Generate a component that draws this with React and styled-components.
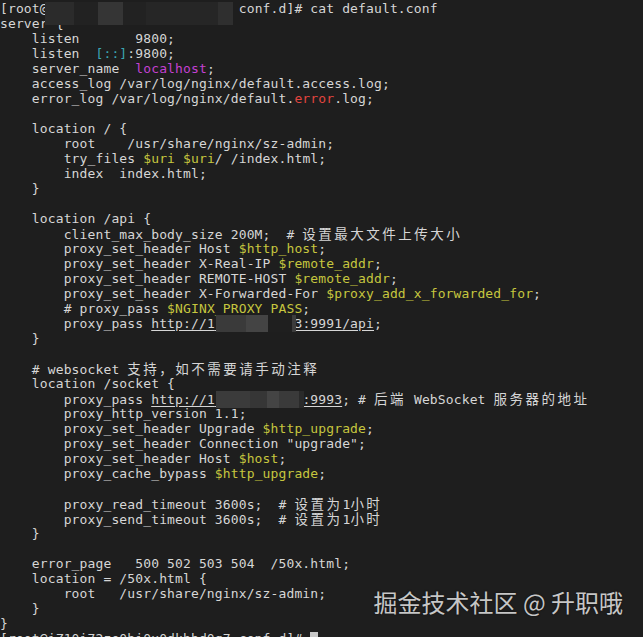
import React from 'react';
import styled, { createGlobalStyle } from 'styled-components';

const GlobalStyle = createGlobalStyle`
  html, body {
    margin: 0;
    padding: 0;
    background: #1e1e1e;
  }
`;

const HOST = 'XXXXXXXXXXXXXXXXXXXXXXX';

// CJK glyphs take two terminal cells
const renderText = (text) =>
  text.split(/([\u3000-\u9fff\uff00-\uffef]+)/).map((part, i) =>
    /[\u3000-\u9fff\uff00-\uffef]/.test(part) ? <Wide key={i}>{part}</Wide> : part
  );

function Mask({ left, top, height, segments, children }) {
  return (
    <MaskWrap>
      {children}
      <MaskBox $left={left} $top={top} $height={height}>
        {segments.map(([w, c], i) => (
          <MaskSeg key={i} $w={w} $c={c} />
        ))}
      </MaskBox>
    </MaskWrap>
  );
}

const promptMask = [
  [29, '#2b2b2b'],
  [24, '#222222'],
  [25, '#353535'],
  [23, '#222222'],
  [72, '#262626'],
  [15, '#2f2f2f'],
];

const apiMask = [
  [30, '#3a3a3a'],
  [22, '#444444'],
  [24, '#1f1f1f'],
  [4, '#3c3c3c'],
];

const socketMask = [
  [34, '#3b3b3b'],
  [17, '#363636'],
  [12, '#444444'],
  [20, '#3a3a3a'],
  [5, '#2a2a2a'],
];

function App() {
  return (
    <React.Fragment>
      <GlobalStyle />
      <Terminal>
        <Line>
          [root@
          <Mask left={-3} top={1} height={23} segments={promptMask}>
            {HOST}
          </Mask>
          {' conf.d]# cat default.conf'}
        </Line>
        <Line>server {'{'}</Line>
        <Line>{'    listen       9800;'}</Line>
        <Line>
          {'    listen  '}
          <Ipv6>[::]</Ipv6>
          {':9800;'}
        </Line>
        <Line>
          {'    server_name  '}
          <Host>localhost</Host>;
        </Line>
        <Line>{'    access_log /var/log/nginx/default.access.log;'}</Line>
        <Line>
          {'    error_log /var/log/nginx/default.'}
          <Err>error</Err>
          {'.log;'}
        </Line>
        <Line />
        <Line>{'    location / {'}</Line>
        <Line>{'        root    /usr/share/nginx/sz-admin;'}</Line>
        <Line>
          {'        try_files '}
          <Var>$uri</Var> <Var>$uri</Var>
          {'/ /index.html;'}
        </Line>
        <Line>{'        index  index.html;'}</Line>
        <Line>{'    }'}</Line>
        <Line />
        <Line>{'    location /api {'}</Line>
        <Line>{renderText('        client_max_body_size 200M;  # 设置最大文件上传大小')}</Line>
        <Line>
          {'        proxy_set_header Host '}
          <Var>$http_host</Var>;
        </Line>
        <Line>
          {'        proxy_set_header X-Real-IP '}
          <Var>$remote_addr</Var>;
        </Line>
        <Line>
          {'        proxy_set_header REMOTE-HOST '}
          <Var>$remote_addr</Var>;
        </Line>
        <Line>
          {'        proxy_set_header X-Forwarded-For '}
          <Var>$proxy_add_x_forwarded_for</Var>;
        </Line>
        <Line>
          {'        # proxy_pass '}
          <Var>$NGINX_PROXY_PASS</Var>;
        </Line>
        <Line>
          {'        proxy_pass '}
          <Link>
            http://1
            <Mask left={1} top={-1} height={17} segments={apiMask}>
              0000000000
            </Mask>
            3:9991/api
          </Link>
          ;
        </Line>
        <Line>{'    }'}</Line>
        <Line />
        <Line>{renderText('    # websocket 支持，如不需要请手动注释')}</Line>
        <Line>{'    location /socket {'}</Line>
        <Line>
          {'        proxy_pass '}
          <Link>
            http://1
            <Mask left={1} top={-1} height={17} segments={socketMask}>
              00000000000
            </Mask>
            :9993
          </Link>
          {renderText('; # 后端 WebSocket 服务器的地址')}
        </Line>
        <Line>{'        proxy_http_version 1.1;'}</Line>
        <Line>
          {'        proxy_set_header Upgrade '}
          <Var>$http_upgrade</Var>;
        </Line>
        <Line>{'        proxy_set_header Connection "upgrade";'}</Line>
        <Line>
          {'        proxy_set_header Host '}
          <Var>$host</Var>;
        </Line>
        <Line>
          {'        proxy_cache_bypass '}
          <Var>$http_upgrade</Var>;
        </Line>
        <Line />
        <Line>{renderText('        proxy_read_timeout 3600s;  # 设置为1小时')}</Line>
        <Line>{renderText('        proxy_send_timeout 3600s;  # 设置为1小时')}</Line>
        <Line>{'    }'}</Line>
        <Line />
        <Line>{'    error_page   500 502 503 504  /50x.html;'}</Line>
        <Line>{'    location = /50x.html {'}</Line>
        <Line>{'        root   /usr/share/nginx/sz-admin;'}</Line>
        <Line>{'    }'}</Line>
        <Line>{'}'}</Line>
        <Line>
          {'[root@iZ10i72ze0bi0x0dkhbd0q7 conf.d]# '}
          <Cursor />
        </Line>
        <Watermark>掘金技术社区 @ 升职哦</Watermark>
      </Terminal>
    </React.Fragment>
  );
}

const Terminal = styled.div`
  position: relative;
  box-sizing: border-box;
  width: 643px;
  height: 637px;
  padding-top: 1px;
  overflow: hidden;
  background: #1e1e1e;
  color: #d6d6d6;
  font-family: 'DejaVu Sans Mono', 'Liberation Mono', 'Noto Sans CJK SC', monospace;
  font-size: 13px;
  letter-spacing: 0.13px;
`;

const Line = styled.div`
  height: 15px;
  line-height: 15px;
  white-space: pre;
`;

const Wide = styled.span`
  font-family: 'Noto Sans CJK SC', sans-serif;
  font-size: 13.5px;
  line-height: 15px;
  letter-spacing: 2.5px;
`;

const Var = styled.span`
  color: #c6c63e;
`;

const Host = styled.span`
  color: #c441d2;
`;

const Err = styled.span`
  color: #e2453f;
`;

const Ipv6 = styled.span`
  color: #3ba6b4;
`;

const Link = styled.span`
  text-decoration: underline;
  text-underline-offset: 2px;
`;

const MaskWrap = styled.span`
  position: relative;
  color: transparent;
`;

const MaskBox = styled.span`
  position: absolute;
  left: ${(p) => p.$left}px;
  top: ${(p) => p.$top}px;
  height: ${(p) => p.$height}px;
  display: flex;
`;

const MaskSeg = styled.span`
  width: ${(p) => p.$w}px;
  height: 100%;
  background: ${(p) => p.$c};
`;

const Cursor = styled.span`
  display: inline-block;
  width: 8px;
  height: 14px;
  vertical-align: top;
  margin-top: 1px;
  background: #c8c8c8;
`;

const Watermark = styled.div`
  position: absolute;
  right: 20px;
  top: 587px;
  font-family: 'Noto Sans CJK SC', 'Noto Sans', sans-serif;
  font-size: 24px;
  line-height: 30px;
  letter-spacing: 0;
  color: rgba(225, 225, 225, 0.88);
  text-shadow: 0 0 2px rgba(0, 0, 0, 0.6);
  white-space: pre;
`;

export default App;
